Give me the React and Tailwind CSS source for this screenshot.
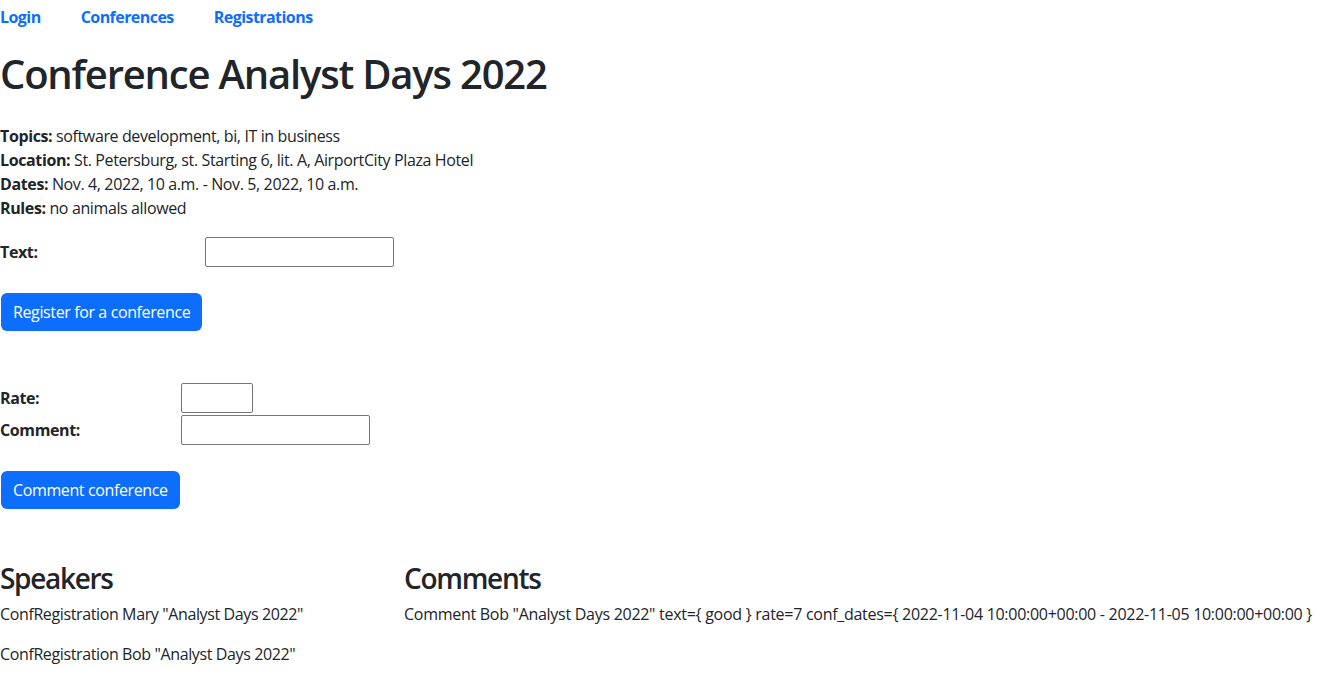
export default function App() {
  return (
    <div className="bg-white text-[#212529] text-[16px] leading-[24px] min-h-[686px] font-['Open_Sans',sans-serif] tracking-[-0.38px]">
      <nav className="flex gap-10 pt-[5px] font-bold text-[#0d6efd] text-[16px] tracking-[-0.55px]">
        <a href="#">Login</a>
        <a href="#">Conferences</a>
        <a href="#">Registrations</a>
      </nav>
      <h1 className="mt-[21px] text-[40px] leading-[48px] font-semibold tracking-[-1.2px]">Conference Analyst Days 2022</h1>
      <div className="mt-[26px]">
        <div><b>Topics:</b> software development, bi, IT in business</div>
        <div><b>Location:</b> St. Petersburg, st. Starting 6, lit. A, AirportCity Plaza Hotel</div>
        <div><b>Dates:</b> Nov. 4, 2022, 10 a.m. - Nov. 5, 2022, 10 a.m.</div>
        <div><b>Rules:</b> no animals allowed</div>
      </div>
      <div className="mt-4 flex items-center h-[32px]">
        <span className="w-[205px] font-bold">Text:</span>
        <input className="w-[189px] h-[30px] border border-[#767676] rounded-[2px]" />
      </div>
      <button className="mt-[25px] ml-[1px] h-[38px] px-3 rounded-[6px] bg-[#0d6efd] text-white">Register for a conference</button>
      <div className="mt-[51px]">
        <div className="flex items-center h-[32px]">
          <span className="w-[181px] font-bold">Rate:</span>
          <input className="w-[72px] h-[30px] border border-[#767676] rounded-[2px]" />
        </div>
        <div className="flex items-center h-[32px]">
          <span className="w-[181px] font-bold">Comment:</span>
          <input className="w-[189px] h-[30px] border border-[#767676] rounded-[2px]" />
        </div>
      </div>
      <button className="mt-[25px] ml-[1px] h-[38px] px-3 rounded-[6px] bg-[#0d6efd] text-white">Comment conference</button>
      <div className="mt-[50px] flex">
        <div className="w-[404px]">
          <h2 className="text-[28px] leading-[38px] font-semibold tracking-[-1.3px]">Speakers</h2>
          <p className="mt-[5px]">ConfRegistration Mary "Analyst Days 2022"</p>
          <p className="mt-4">ConfRegistration Bob "Analyst Days 2022"</p>
        </div>
        <div>
          <h2 className="text-[28px] leading-[38px] font-semibold tracking-[-1.3px]">Comments</h2>
          <p className="mt-[5px] tracking-[-0.28px]">Comment Bob "Analyst Days 2022" text={"{ good }"} rate=7 conf_dates={"{ 2022-11-04 10:00:00+00:00 - 2022-11-05 10:00:00+00:00 }"}</p>
        </div>
      </div>
    </div>
  );
}
